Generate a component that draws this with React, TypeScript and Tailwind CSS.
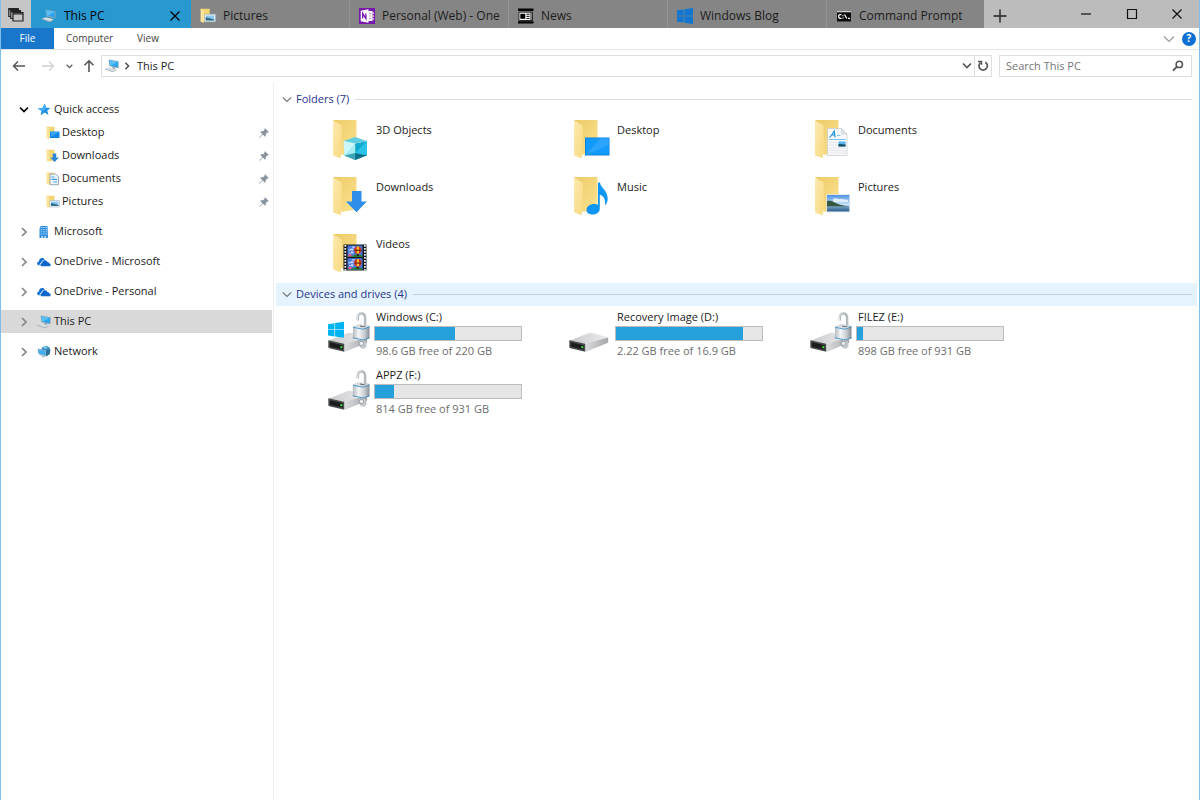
import type { ReactNode } from "react";

/* ---------- small glyphs ---------- */

function Chevron({ dir, className }: { dir: "right" | "down"; className?: string }) {
  return (
    <svg viewBox="0 0 10 10" className={className ?? "size-[10px]"} fill="none" stroke="currentColor" strokeWidth="1.7">
      {dir === "right" ? <path d="M3 1l4 4-4 4" /> : <path d="M1 2.500l4 4 4-4" />}
    </svg>
  );
}

function PinGlyph() {
  return (
    <svg viewBox="0 0 10 10" className="size-[10px]" fill="#8a949e">
      <path d="M6 .2L9.8 4l-.9.6-.6-.2L6.8 6l-.1 1.9-.8.8L3.8 6.600.8 9.700.2 9.800.3 9.200 3.300 6.200 1.300 4.100l.8-.8L4 3.200 5.600 1.700 5.400 1.100z" />
    </svg>
  );
}

function PcGlyph() {
  return (
    <svg viewBox="0 0 16 14" className="h-[14px] w-[16px] shrink-0">
      <path d="M4.500.400L14.600 2.200V9.300L5.400 7.200z" fill="#8fa6b4" />
      <path d="M5.200 1.200l8.700 1.600v5.600L6 6.600z" fill="#2aa3ee" />
      <path d="M5.200 1.200l8.700 1.600-7 3.900-.9-.1z" fill="#5cc0f6" />
      <path d="M8.500 8l3 .7-1 1.500-2.500-.7z" fill="#8798a3" />
      <path d="M.8 9.700l4.200-1.400 7.600 2.200-3.700 2z" fill="#d6dde1" />
      <path d="M.8 9.700l8.100 2.800 3.700-2v.7l-3.700 2L.8 10.400z" fill="#9aa8b0" />
    </svg>
  );
}

type MiniKind = "desktop" | "downloads" | "documents" | "pictures";

function MiniFolder({ kind, className }: { kind: MiniKind; className?: string }) {
  return (
    <svg viewBox="0 0 14 14" className={className ?? "size-[14px] shrink-0"}>
      <path d="M.5.700h8V12H3z" fill="#f3d573" />
      <path d="M.5.700l3 1.500V13l-3-1z" fill="#fbe39a" />
      {kind === "desktop" && <path d="M4 5.500h9.500v6.500H4z" fill="#0f86e0" />}
      {kind === "desktop" && <path d="M4.500 6h8.500L5 11z" fill="#39a5f3" />}
      {kind === "downloads" && <path d="M6.800 4.500h3.400v4H13l-4.400 4.500L4.200 8.500h2.600z" fill="#2f86d8" />}
      {kind === "documents" && (
        <g>
          <path d="M4 2h5.500L12.500 4.700v8H4z" fill="#eef4f8" stroke="#7e97a8" strokeWidth=".8" />
          <path d="M5.500 5h3M5.500 7.300h5.500M7.500 10h3.500" stroke="#3d9bdb" strokeWidth="1.200" />
        </g>
      )}
      {kind === "pictures" && (
        <g>
          <path d="M4 5.500h9.500v6.500H4z" fill="#fff" stroke="#9fb0bb" strokeWidth=".6" />
          <path d="M5 6.500h7.500V11H5z" fill="#8cc9f2" />
          <path d="M5 8l3 .7 4.500 1.300V11H5z" fill="#2f6f86" />
        </g>
      )}
    </svg>
  );
}

function StarGlyph() {
  return (
    <svg viewBox="0 0 14 14" className="size-[14px] shrink-0">
      <path d="M7.800.8l1.500 4 4.300.1-3.400 2.700 1.300 4.500L7.500 9.600l-3.900 2.900 1-4.600L.800 5.300l4.600-.3z" fill="#1f8fe6" />
      <path d="M7.800.8l1.500 4-1.700 2.500-3 .6L.800 5.300l4.600-.3z" fill="#46aef5" />
    </svg>
  );
}

function BuildingGlyph() {
  return (
    <svg viewBox="0 0 14 14" className="size-[14px] shrink-0">
      <path d="M3.500 1h7l.5 12H2.500V4z" fill="#2b8bdc" />
      <path d="M3.700 2.500h6.500M3.700 4.700h6.500M3.700 6.900h6.500M3.700 9.100h6.500" stroke="#b9e0fb" strokeWidth="1" strokeDasharray="1.500 .9" />
      <path d="M4.500 11h1.200v2H4.500zM7.500 11h1.200v2H7.500z" fill="#fff" />
    </svg>
  );
}

function CloudGlyph() {
  return (
    <svg viewBox="0 0 14 10" className="h-[10px] w-[14px] shrink-0">
      <path d="M2.600 8.500C.7 8.500 0 7.400.1 6.300c.1-1.100.9-1.800 1.900-1.900C2 2.500 3.300 1 5.100 1c1.300 0 2.300.6 2.900 1.700-2.300.2-3.500 1.600-3.700 3.100-1.200.2-1.800 1.400-1.700 2.700z" fill="#0f6fd0" />
      <path d="M5.200 9.400c-1.200 0-2-.7-2-1.700 0-1 .8-1.600 1.700-1.700 0-1.700 1.200-2.900 2.900-2.900 1.300 0 2.300.7 2.800 1.900 1-.1 1.700.4 1.800 1.300.9.100 1.500.7 1.500 1.500 0 .9-.6 1.600-1.600 1.600z" fill="#0a63c9" stroke="#fff" strokeWidth=".5" />
    </svg>
  );
}

function NetworkGlyph() {
  return (
    <svg viewBox="0 0 16 14" className="h-[14px] w-[16px] shrink-0">
      <circle cx="9.800" cy="5.500" r="4.600" fill="#3a8fc7" />
      <path d="M7 2.200c1.500-1.300 3.500-.8 4.500.2L9.500 4z" fill="#8ecde9" />
      <path d="M1.500 3.500l8.500 2v6L2.500 9.200z" fill="#8fb0c1" />
      <path d="M2.200 4.400l7 1.700v4.300L3 8.600z" fill="#3eb1f2" />
      <path d="M10 5.500l3.800-1.300v5L10 11.500z" fill="#2c6f99" />
      <path d="M4 10.500l2.500-.4 3 1.400-2 1.500z" fill="#c3cdd3" />
    </svg>
  );
}

function WindowsGlyph() {
  return (
    <svg viewBox="0 0 16 16" className="size-[16px] shrink-0" fill="#1477cf">
      <path d="M0 2.300L6.600 1.400v6.300H0zM7.200 1.300L16 0v7.700H7.200zM0 8.300h6.600v6.300L0 13.700zM7.200 8.300H16V16l-8.800-1.300z" />
    </svg>
  );
}

/* ---------- tab icons ---------- */

function OneNoteGlyph() {
  return (
    <svg viewBox="0 0 16 16" className="size-[16px] shrink-0">
      <path d="M0 0h16v16H0z" fill="#7719aa" />
      <path d="M9 3h4.500v10H9z" fill="#fff" />
      <path d="M13.500 4.300h1.200v1.700h-1.200zM13.500 7.200h1.200v1.700h-1.200zM13.500 10h1.200v1.700h-1.200z" fill="#fff" />
      <path d="M10 5.500h2.500M10 8h2.500M10 10.500h2.500" stroke="#b07fcd" strokeWidth=".8" />
      <path d="M1.700 2.800L9.500 1.300v13.400L1.700 13.200z" fill="#fff" />
      <path d="M3.700 10.600V5.400l3.200 5.200V5.400" fill="none" stroke="#7719aa" strokeWidth="1.300" />
    </svg>
  );
}

function NewsGlyph() {
  return (
    <svg viewBox="0 0 16 16" className="size-[16px] shrink-0">
      <path d="M0 .5h15.500v2.500H0zM0 13.200h15.500V15.500H0z" fill="#000" />
      <path d="M1 4.200h13.500v8.300H1z" fill="#fff" stroke="#000" strokeWidth=".8" />
      <path d="M2.300 5.800h5v5h-5z" fill="#000" />
      <path d="M8.500 6.200h3M8.500 8.300h3M8.500 10.400h3M13 4.500v7.500" stroke="#000" />
    </svg>
  );
}

function ConsoleGlyph() {
  return (
    <svg viewBox="0 0 16 16" className="size-[16px] shrink-0">
      <path d="M1 3h14v10.500H1z" fill="#0a0a0a" />
      <path d="M1 3h14v1.300H1z" fill="#c9c9c9" />
      <path d="M5.500 6.700H3.800L2.700 7.500v2l1.100.8h1.700M7 7.300v1M7 9.400v1M8.500 6.500l2.300 4M12 10.300h2" fill="none" stroke="#fff" strokeWidth="1.200" />
    </svg>
  );
}

function TabStackGlyph() {
  return (
    <svg viewBox="0 0 16 16" className="size-[16px]" fill="#c6c6c6" stroke="#222" strokeWidth="1.200">
      <path d="M.8 1.500h9.500v8H.8zM.8 2.700h9.500" />
      <path d="M2.800 3.500h9.700v8H2.800zM2.800 4.700h9.700" />
      <path d="M5 5.700h10v8.300H5zM5 7h10" />
    </svg>
  );
}

/* ---------- large icons ---------- */

function Gradients() {
  return (
    <svg className="absolute size-0" aria-hidden="true">
      <defs>
        <linearGradient id="folderBack" x1="0" y1="0" x2="1" y2="1">
          <stop offset="0" stopColor="#edca66" />
          <stop offset="1" stopColor="#fbe391" />
        </linearGradient>
        <linearGradient id="folderFlap" x1="0" y1="0" x2="1" y2="1">
          <stop offset="0" stopColor="#fdeab0" />
          <stop offset="1" stopColor="#f7d980" />
        </linearGradient>
        <linearGradient id="sky" x1="0" y1="0" x2="0" y2="1">
          <stop offset="0" stopColor="#4d93e6" />
          <stop offset="1" stopColor="#dceefb" />
        </linearGradient>
        <linearGradient id="water" x1="0" y1="0" x2="0" y2="1">
          <stop offset="0" stopColor="#86acc9" />
          <stop offset="1" stopColor="#2b5c8e" />
        </linearGradient>
        <linearGradient id="driveTop" x1="0" y1="0" x2="1" y2="0">
          <stop offset="0" stopColor="#c9cacc" />
          <stop offset="1" stopColor="#ececee" />
        </linearGradient>
        <linearGradient id="driveSide" x1="0" y1="0" x2="1" y2="0">
          <stop offset="0" stopColor="#dcdddf" />
          <stop offset="1" stopColor="#a5a7aa" />
        </linearGradient>
        <linearGradient id="lockBody" x1="0" y1="0" x2="1" y2="0">
          <stop offset="0" stopColor="#b4bac0" />
          <stop offset="0.35" stopColor="#f3f5f7" />
          <stop offset="0.7" stopColor="#c9ced3" />
          <stop offset="1" stopColor="#868c92" />
        </linearGradient>
      </defs>
    </svg>
  );
}

type FolderKind = "objects" | "desktop" | "documents" | "downloads" | "music" | "pictures" | "videos";

function FilmFrame({ y }: { y: number }) {
  return (
    <g transform={`translate(0 ${y})`}>
      <path d="M14.500 0h15v11.500h-15z" fill="#4778e0" />
      <path d="M15 4h2.500v-1h3v2H15zM19 1h3v1.300h-3zM16 7h2v-1h2.500v2H16z" fill="#c5d6f8" />
      <path d="M14.500 10.300h5l3-1.500 7 1v1.700h-15z" fill="#2a7a3a" />
      <circle cx="24.800" cy="4.600" r="3.700" fill="#d8301c" />
      <path d="M23.800 1h2.200v7h-2.200z" fill="#f5c022" />
      <path d="M21.500 4.300h6.800v1.200h-6.800z" fill="#6b2a14" />
      <path d="M23.800 8.700h2v1.800h-2z" fill="#2b1a10" />
      <path d="M15 9.500l2-1.200 2 1.500-1 1.200h-3z" fill="#e05a90" />
    </g>
  );
}

function FolderIcon({ kind }: { kind: FolderKind }) {
  return (
    <svg viewBox="0 0 42 43" className="h-[43px] w-[42px] shrink-0">
      <g transform="translate(6 3)">
        <path d="M.3 0h23.200v32.500L8.500 35z" fill="url(#folderBack)" />
        <path d="M0 .2l7.800 4.800c.7.500 1 1 1 2v24.500c0 1.200-1 1.500-1 3V38.200L.8 35.800C.2 35.500 0 35.200 0 34.500z" fill="url(#folderFlap)" />
        {kind === "objects" && (
          <g>
            <path d="M10.700 21l11.500 2.500V40l-11-4.500z" fill="#a5edf3" />
            <path d="M22.200 23.500L34 21v14.300L22.200 40z" fill="#11a9cf" />
            <path d="M10.700 21L22 17l12 4-11.800 2.500z" fill="#5fcfe0" />
            <path d="M11.200 35.500l11-2.500v7z" fill="#3aa3b5" />
            <path d="M22.200 33L34 35.300 22.200 40z" fill="#0d6f88" />
            <path d="M10.700 21l11.500 2.500L11.200 35.500z" fill="#c9f6f8" />
            <path d="M34 21v14.300L22.200 33z" fill="#28c3e6" />
          </g>
        )}
        {kind === "desktop" && (
          <g>
            <path d="M11 17.500h24.500v18H11z" fill="#0a78d6" />
            <path d="M11.700 18.200h23.100v16.600H11.700z" fill="#139bfb" />
            <path d="M11.700 34.800l15-16.600h8.100v7z" fill="#2aa4fc" />
          </g>
        )}
        {kind === "documents" && (
          <g>
            <path d="M12.500 8.500h14l5.500 5.500v21.500H12.500z" fill="#f7f8f9" stroke="#c3c9ce" strokeWidth=".7" />
            <path d="M26.500 8.500V14H32z" fill="#dfe4e8" stroke="#c3c9ce" strokeWidth=".5" />
            <path d="M14.500 17.300c1.700-1 3.300-4 4.700-6.300l.8 6.300M16.700 15h3" stroke="#1c93df" strokeWidth="1.200" fill="none" />
            <path d="M22 15.500h3.500M14 19.500h16.500" stroke="#6dbdeb" strokeWidth=".9" />
            <path d="M14 22.300h8M14 25h8M14 28h16.500M14 30.500h16.500M14 33h16.500" stroke="#dde0e3" strokeWidth=".8" />
            <path d="M23.500 21.500h7v5h-7z" fill="#55b4ec" />
            <path d="M23.500 24l7 .5v2h-7z" fill="#174b5e" />
          </g>
        )}
        {kind === "downloads" && <path d="M19 14h9.500v10.500h5.300L23.500 35.200 13 24.500h6z" fill="#2e8ee9" />}
        {kind === "music" && (
          <path d="M24 5.500h2c.5 5.500 7.700 8 7.700 16 0 3-1 5-2.700 7 .8-5.200-.8-9.500-5.200-10.800V31.500c0 3.500-3 6-7 6-3.500 0-6.300-1.500-6.300-4.500 0-3.500 3.500-6 7.500-6 1.600 0 3 .3 4 1z" fill="#0f95f2" />
        )}
        {kind === "pictures" && (
          <g>
            <path d="M11.500 17.500h23.300v17.500H11.500z" fill="#fff" stroke="#ccd5dc" strokeWidth=".5" />
            <path d="M12 18h22.300v11H12z" fill="url(#sky)" />
            <path d="M12 28.500h22.300v6H12z" fill="url(#water)" />
            <path d="M18 22c2-1.500 4-.5 5 0s3-1 5 0 3 0 5 1v2H18z" fill="#fff" opacity=".7" />
            <path d="M12 24c3-.5 5 0 8 1.700s7 2.300 12 3.500H12z" fill="#33573f" />
          </g>
        )}
        {kind === "videos" && (
          <g>
            <path d="M10.500 10.500h23v26h-23z" fill="#15171c" />
            <path d="M12.300 11v25.500M31.900 11v25.500" stroke="#e9edf0" strokeWidth="1.800" strokeDasharray="1.700 1.300" />
            <FilmFrame y={11.500} />
            <FilmFrame y={24.200} />
          </g>
        )}
      </g>
    </svg>
  );
}

function DriveIcon({ lock, windows }: { lock?: boolean; windows?: boolean }) {
  return (
    <svg viewBox="0 0 42 42" className="h-[42px] w-[42px] shrink-0">
      <path d="M1 28.500L20.500 20.800c.6-.2 1-.2 1.600 0L38.500 25c.7.3.7.6.2.9L16.500 31.800z" fill="url(#driveTop)" />
      <path d="M16 31.800L39.200 25.500V29.700c0 .7-.3 1.100-.9 1.400L18.500 39.300c-1 .4-1.700.5-2.500.300z" fill="url(#driveSide)" />
      <path d="M.8 28.300L16.200 31.700V39.700L1.400 36.200C.6 36 .3 35.600.3 34.800V28.800c0-.4.200-.6.500-.5z" fill="#4a4b4d" />
      <path d="M1.800 30.300l13 2.900v4.600l-13-3.100z" fill="#1b1c1e" />
      <path d="M12.300 34.200h2v2h-2z" fill="#3be03b" />
      {windows && (
        <path d="M0 12.200l6.500-1v6.300H0zM7.100 11.100L16 9.800v7.700H7.100zM0 18.100h6.500v6.300L0 23.500zM7.100 18.100H16v7.700l-8.900-1.300z" fill="#00b4f1" />
      )}
      {lock && (
        <g>
          <path d="M29.800 8.500V5.800C29.800 2.800 31.300 1.400 33.500 1.400s3.600 1.600 3.600 4.400V14" fill="none" stroke="#b4bbc0" strokeWidth="2.500" />
          <path d="M29.500 8.500V5.800c0-2.800 1.500-4.400 3.700-4.600" fill="none" stroke="#e4e8eb" strokeWidth="1" />
          <path d="M25 14.500l6-2.500L41.500 14v12.500L35 28.800 24.800 26.500z" fill="url(#lockBody)" />
          <path d="M25 14.500l6-2.500L41.500 14 35 16.300z" fill="#d9dde1" />
          <path d="M25 15.300l10 1.900 6.500-2.200M24.800 25.700l10.200 2.300 6.500-2.300" fill="none" stroke="#3f93c8" strokeWidth=".9" />
          <path d="M32 14l3.300.7 2-.7" stroke="#555b60" fill="none" strokeWidth=".9" />
          <path d="M30.500 28.500l7.500.5v5.500c-1 1.800-2.500 2-4 1.500s-3-2-3.500-4z" fill="#c8cdd2" stroke="#9aa1a7" strokeWidth=".5" />
          <circle cx="33.500" cy="31.500" r="2.200" fill="#eef0f2" stroke="#868d93" strokeWidth=".8" />
        </g>
      )}
    </svg>
  );
}

/* ---------- data ---------- */

const tabs: { label: string; icon: ReactNode }[] = [
  { label: "Pictures", icon: <MiniFolder kind="pictures" className="size-[16px] shrink-0" /> },
  { label: "Personal (Web) - One", icon: <OneNoteGlyph /> },
  { label: "News", icon: <NewsGlyph /> },
  { label: "Windows Blog", icon: <WindowsGlyph /> },
  { label: "Command Prompt", icon: <ConsoleGlyph /> },
];

const pinned: { label: string; kind: MiniKind }[] = [
  { label: "Desktop", kind: "desktop" },
  { label: "Downloads", kind: "downloads" },
  { label: "Documents", kind: "documents" },
  { label: "Pictures", kind: "pictures" },
];

const places: { label: string; icon: ReactNode; selected?: boolean }[] = [
  { label: "Microsoft", icon: <BuildingGlyph /> },
  { label: "OneDrive - Microsoft", icon: <CloudGlyph /> },
  { label: "OneDrive - Personal", icon: <CloudGlyph /> },
  { label: "This PC", icon: <PcGlyph />, selected: true },
  { label: "Network", icon: <NetworkGlyph /> },
];

const folders: { label: string; kind: FolderKind }[] = [
  { label: "3D Objects", kind: "objects" },
  { label: "Desktop", kind: "desktop" },
  { label: "Documents", kind: "documents" },
  { label: "Downloads", kind: "downloads" },
  { label: "Music", kind: "music" },
  { label: "Pictures", kind: "pictures" },
  { label: "Videos", kind: "videos" },
];

const drives = [
  { label: "Windows (C:)", free: "98.6 GB free of 220 GB", used: 55, lock: true, windows: true },
  { label: "Recovery Image (D:)", free: "2.22 GB free of 16.9 GB", used: 87 },
  { label: "FILEZ (E:)", free: "898 GB free of 931 GB", used: 4, lock: true },
  { label: "APPZ (F:)", free: "814 GB free of 931 GB", used: 13, lock: true },
];

/* ---------- layout ---------- */

function TitleBar() {
  return (
    <header className="flex h-[28px] bg-[#bcbcbc]">
      <button aria-label="Tabs you've set aside" className="flex w-[30px] shrink-0 items-center justify-center bg-[#c6c6c6] pt-[2px]">
        <TabStackGlyph />
      </button>
      <div role="tablist" className="flex min-w-0 text-[12px] text-[#1c1c1c]">
        <div className="flex w-[160px] items-center bg-[#2898d1] pr-[10px] pl-[10px] text-black">
          <button role="tab" aria-selected="true" className="flex min-w-0 flex-1 items-center gap-[7px] pt-[3px]">
            <PcGlyph />
            <span className="truncate">This PC</span>
          </button>
          <button aria-label="Close tab" className="flex shrink-0 items-center pt-[3px]">
            <svg viewBox="0 0 12 12" className="size-[12px]" stroke="currentColor" strokeWidth="1.200">
              <path d="M1.500 1.500l9 9M10.500 1.500l-9 9" />
            </svg>
          </button>
        </div>
        {tabs.map((t) => (
          <button
            key={t.label}
            role="tab"
            aria-selected="false"
            className="flex w-[159px] min-w-0 items-center gap-[7px] border-r border-[#949494] bg-[#858585] pt-[3px] pl-[9px] last:w-[157px] last:border-r-0"
          >
            {t.icon}
            <span className="truncate">{t.label}</span>
          </button>
        ))}
      </div>
      <button aria-label="New tab" className="flex w-[32px] shrink-0 items-center justify-center pt-[3px]">
        <svg viewBox="0 0 14 14" className="size-[14px]" stroke="#222" strokeWidth="1.400">
          <path d="M7 .5v13M.5 7h13" />
        </svg>
      </button>
      <div className="ml-auto flex">
        <button aria-label="Minimize" className="flex w-[46px] items-center justify-center">
          <svg viewBox="0 0 12 12" className="size-[12px]" stroke="#111" strokeWidth="1.200">
            <path d="M1 6h10" />
          </svg>
        </button>
        <button aria-label="Maximize" className="flex w-[46px] items-center justify-center">
          <svg viewBox="0 0 12 12" className="size-[12px]" stroke="#111" fill="none" strokeWidth="1.200">
            <path d="M1.500 1.500h9v9h-9z" />
          </svg>
        </button>
        <button aria-label="Close" className="flex w-[44px] items-center justify-center">
          <svg viewBox="0 0 12 12" className="size-[12px]" stroke="#111" strokeWidth="1.200">
            <path d="M1.500 1.500l9 9M10.500 1.500l-9 9" />
          </svg>
        </button>
      </div>
    </header>
  );
}

function Ribbon() {
  return (
    <nav className="flex h-[22px] border-b border-[#e4e4e4] text-[10px] text-[#444]">
      <button className="w-[53px] bg-[#1976cb] text-white">File</button>
      <button className="ml-[12px]">Computer</button>
      <button className="ml-[24px]">View</button>
      <div className="ml-auto flex items-center gap-[7px] pr-[3px]">
        <button aria-label="Expand the ribbon" className="text-[#9a9a9a]">
          <svg viewBox="0 0 12 10" className="h-[10px] w-[12px]" fill="none" stroke="currentColor" strokeWidth="1.200">
            <path d="M1 2.500l5 5 5-5" />
          </svg>
        </button>
        <button aria-label="Help" className="flex size-[14px] items-center justify-center rounded-full bg-[#0c6fd1] text-[10px] font-bold text-white">
          ?
        </button>
      </div>
    </nav>
  );
}

function AddressRow() {
  return (
    <div className="flex h-[32px] items-center pr-[7px] text-[11px] text-[#1c1c1c]">
      <div className="flex w-[100px] shrink-0 items-center text-[#555]">
        <button aria-label="Back" className="ml-[11px]">
          <svg viewBox="0 0 14 12" className="h-[12px] w-[14px]" fill="none" stroke="currentColor" strokeWidth="1.500">
            <path d="M13 6H1.500M6 1.500L1.500 6 6 10.500" />
          </svg>
        </button>
        <button aria-label="Forward" className="ml-[15px] text-[#cfcfcf]">
          <svg viewBox="0 0 14 12" className="h-[12px] w-[14px]" fill="none" stroke="currentColor" strokeWidth="1.300">
            <path d="M1 6h11.500M8 1.500L12.500 6 8 10.500" />
          </svg>
        </button>
        <button aria-label="Recent locations" className="ml-[11px]">
          <Chevron dir="down" className="size-[7px]" />
        </button>
        <button aria-label="Up" className="ml-[10px]">
          <svg viewBox="0 0 12 14" className="h-[14px] w-[12px]" fill="none" stroke="currentColor" strokeWidth="1.600">
            <path d="M6 13V1.800M1.500 6.300L6 1.800l4.500 4.500" />
          </svg>
        </button>
      </div>
      <div className="flex h-[22px] min-w-0 flex-1 items-center border border-[#dedede] pl-[2px]">
        <PcGlyph />
        <Chevron dir="right" className="ml-[3px] size-[8px] text-[#444]" />
        <button className="ml-[6px]">This PC</button>
        <button aria-label="Previous locations" className="ml-auto mr-[2px] text-[#555]">
          <Chevron dir="down" />
        </button>
        <button aria-label="Refresh" className="flex h-full w-[17px] items-center justify-center border-l border-[#dedede] text-[#555]">
          <svg viewBox="0 0 12 12" className="size-[12px]" fill="none" stroke="currentColor" strokeWidth="1.700">
            <path d="M8.300 2.200A4.200 4.200 0 1 1 3.500 2.600" />
            <path d="M1 1.500h3.500v3.300" strokeWidth="1.500" />
          </svg>
        </button>
      </div>
      <label className="ml-[7px] flex h-[22px] w-[193px] shrink-0 items-center border border-[#dedede] pr-[7px] pl-[6px]">
        <input
          type="text"
          aria-label="Search This PC"
          placeholder="Search This PC"
          className="min-w-0 flex-1 bg-transparent outline-none placeholder:text-[#757575]"
        />
        <svg viewBox="0 0 12 12" className="size-[12px]" fill="none" stroke="#555" strokeWidth="1.500">
          <circle cx="7.300" cy="4.400" r="3.200" />
          <path d="M5 6.700L1 10.700" strokeWidth="1.900" />
        </svg>
      </label>
    </div>
  );
}

function Sidebar() {
  return (
    <aside className="w-[273px] shrink-0 border-r border-[#efefef] pt-[16px] pr-px text-[11px]">
      <ul>
        <li>
          <button aria-expanded="true" className="flex h-[23px] w-full items-center pl-[18px]">
            <Chevron dir="down" className="size-[10px] text-black" />
            <span className="ml-[7px] flex w-[16px] justify-center">
              <StarGlyph />
            </span>
            <span className="ml-[2px]">Quick access</span>
          </button>
          <ul>
            {pinned.map((p) => (
              <li key={p.label}>
                <button className="flex h-[23px] w-full items-center pr-[3px] pl-[45px]">
                  <MiniFolder kind={p.kind} />
                  <span className="ml-[2px]">{p.label}</span>
                  <span className="ml-auto">
                    <PinGlyph />
                  </span>
                </button>
              </li>
            ))}
          </ul>
        </li>
      </ul>
      <ul className="mt-[7px] flex flex-col gap-[7px]">
        {places.map((p) => (
          <li key={p.label}>
            <button className={p.selected ? "flex h-[23px] w-full items-center bg-[#d9d9d9] pl-[18px]" : "flex h-[23px] w-full items-center pl-[18px]"}>
              <Chevron dir="right" className="size-[10px] text-[#858585]" />
              <span className="ml-[7px] flex w-[16px] justify-center">{p.icon}</span>
              <span className="ml-[2px]">{p.label}</span>
            </button>
          </li>
        ))}
      </ul>
    </aside>
  );
}

function GroupHeader({ title, active }: { title: string; active?: boolean }) {
  return (
    <h2 className={active ? "flex h-[23px] items-center bg-[#e5f3ff] pr-[5px] pl-[6px]" : "flex h-[23px] items-center pr-[5px] pl-[6px]"}>
      <button aria-expanded="true" className="flex items-center gap-[4px] text-[11px] text-[#26358c]">
        <svg viewBox="0 0 10 10" className="size-[10px] text-[#707070]" fill="none" stroke="currentColor" strokeWidth="1.100">
          <path d="M.8 2.300L5 6.500l4.200-4.200" />
        </svg>
        {title}
      </button>
      <span className={active ? "ml-[6px] h-px flex-1 bg-[#bfd2e3]" : "ml-[6px] h-px flex-1 bg-[#dcdcdc]"} />
    </h2>
  );
}

export default function App() {
  return (
    <div className="flex min-h-screen flex-col border-x border-[#7cc0ea] bg-white font-['Open_Sans','Noto_Sans',sans-serif] text-[#1c1c1c]">
      <Gradients />
      <TitleBar />
      <Ribbon />
      <AddressRow />
      <div className="flex flex-1">
        <Sidebar />
        <main className="min-w-0 flex-1 pt-[6px] pr-[2px] pl-[2px]">
          <GroupHeader title="Folders (7)" />
          <ul className="grid grid-cols-[repeat(auto-fill,241px)] gap-y-[14px] pt-[6px] pl-[51px]">
            {folders.map((f) => (
              <li key={f.label}>
                <button className="flex items-start gap-[7px] text-left text-[11px] leading-[16px]">
                  <FolderIcon kind={f.kind} />
                  <span className="pt-[5px]">{f.label}</span>
                </button>
              </li>
            ))}
          </ul>
          <div className="mt-[9px]">
            <GroupHeader title="Devices and drives (4)" active />
          </div>
          <ul className="grid grid-cols-[repeat(auto-fill,241px)] gap-y-[8px] pt-[3px] pl-[52px]">
            {drives.map((d) => (
              <li key={d.label}>
                <button className="flex items-start gap-[4px] text-left text-[11px] leading-[16px]">
                  <span className="pt-[3px]">
                    <DriveIcon lock={d.lock} windows={d.windows} />
                  </span>
                  <span className="block w-[148px]">
                    <span className="block pl-[2px]">{d.label}</span>
                    <span className="mt-px block h-[15px] border border-[#bcbcbc] bg-[#e6e6e6]">
                      <span className="block h-full bg-[#26a0da]" style={{ width: `${d.used}%` }} />
                    </span>
                    <span className="mt-[2px] block pl-[2px] text-[#6d6d6d]">{d.free}</span>
                  </span>
                </button>
              </li>
            ))}
          </ul>
        </main>
      </div>
    </div>
  );
}
